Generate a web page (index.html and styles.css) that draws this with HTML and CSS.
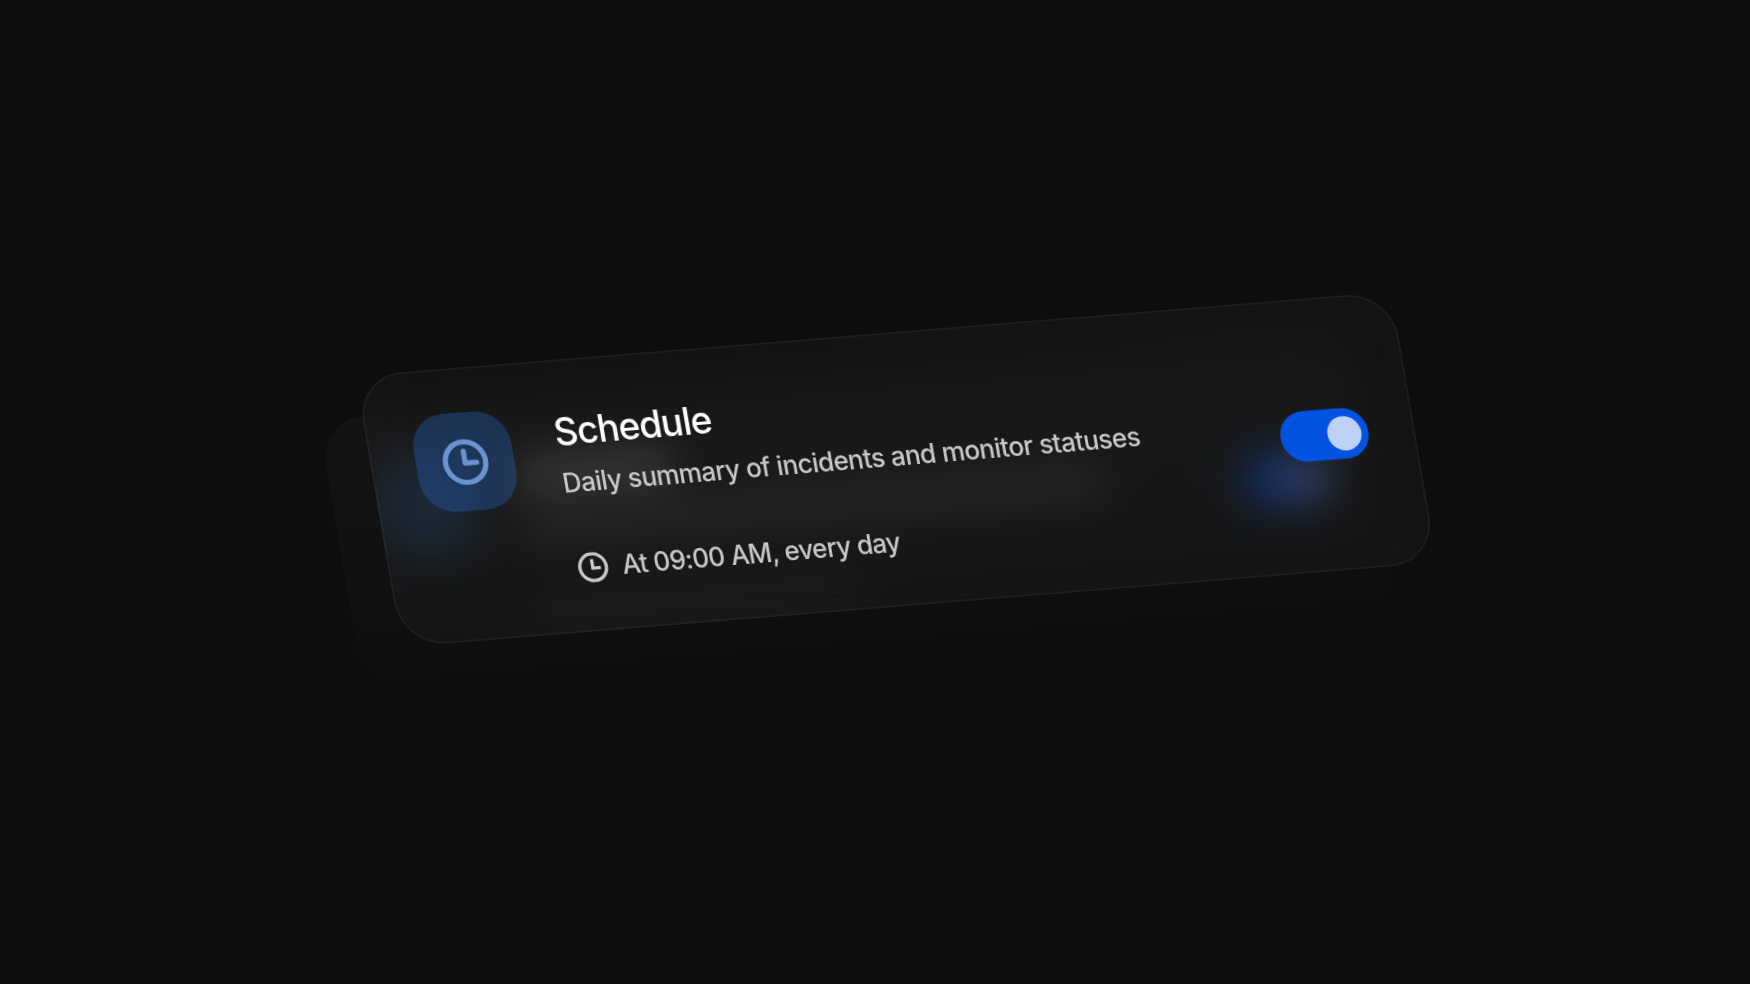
FILE: index.html
```
<!DOCTYPE html>
<html lang="en">
<head>
    <meta charset="utf-8">
    <title>Schedule</title>
    <link rel="stylesheet" href="styles.css">
</head>
<body>
    <div class="stage">
        <div class="card card-shadow" aria-hidden="true">
            <div class="icon"></div>
            <div class="content">
                <div class="bar bar-title"></div>
                <div class="bar bar-text"></div>
                <div class="bar bar-time"></div>
            </div>
            <div class="toggle"><span class="knob"></span></div>
        </div>

        <div class="card card-main">
            <div class="icon">
                <svg width="46" height="46" viewBox="0 0 46 46" fill="none" stroke="currentColor" stroke-width="5.2" stroke-linecap="round" stroke-linejoin="round">
                    <circle cx="23.5" cy="23" r="20"/>
                    <path d="M23 12.2V24H34.5"/>
                </svg>
            </div>
            <div class="content">
                <h1 class="title">Schedule</h1>
                <p class="text">Daily summary of incidents and monitor statuses</p>
                <div class="time">
                    <svg width="30" height="30" viewBox="0 0 30 30" fill="none" stroke="currentColor" stroke-width="3.3">
                        <circle cx="15" cy="15" r="13.2"/>
                        <path d="M14.6 7V16H22.6"/>
                    </svg>
                    <span class="time-label">At 09:00 AM, every day</span>
                </div>
            </div>
            <div class="toggle"><span class="knob"></span></div>
        </div>
    </div>
</body>
</html>
```
FILE: styles.css
```
body {
    margin: 0;
    height: 100vh;
    display: flex;
    align-items: center;
    justify-content: center;
    overflow: hidden;
    background-color: #0d0d0d;
    font-family: Inter, sans-serif;
}
.stage {
    display: grid;
    transform: matrix(0.9967, -0.0813, 0.172, 1.008, 0, 0);
}
.card {
    grid-area: 1 / 1;
    display: flex;
    align-items: flex-start;
    gap: 44px;
    width: 1039px;
    height: 269px;
    padding: 44px 46px 44px 45px;
    box-sizing: border-box;
    border-radius: 46px;
}
.card-shadow {
    transform: translate(-20px, 19px);
    background: linear-gradient(#131313, #111 60%, #0d0d0d);
}
.card-main {
    transform: translate(24.5px, -21px);
    background-color: rgba(255, 255, 255, 0.024);
    box-shadow: inset 0 0 0 1.5px rgba(255, 255, 255, 0.055);
    backdrop-filter: blur(20px);
}
.icon {
    flex: none;
    display: flex;
    align-items: center;
    justify-content: center;
    width: 98px;
    height: 97px;
    border-radius: 34px;
    background-color: rgba(40, 100, 190, 0.36);
    color: #6b93cf;
}
.icon svg,
.time svg {
    display: block;
}
.content {
    flex: 1;
    padding-top: 4px;
}
.title {
    margin: 0;
    color: #fff;
    font-size: 37px;
    font-weight: 500;
    line-height: 46px;
    letter-spacing: -1px;
}
.text {
    margin: 12px 0 0;
    color: #c8c8c8;
    font-size: 26px;
    font-weight: 450;
    line-height: 32px;
    letter-spacing: -0.57px;
    white-space: nowrap;
}
.time {
    display: flex;
    align-items: center;
    gap: 14px;
    margin: 52px 0 0 1px;
    color: #c8c8c8;
}
.time-label {
    font-size: 26px;
    font-weight: 450;
    line-height: 32px;
    letter-spacing: -0.7px;
    white-space: nowrap;
}
.toggle {
    flex: none;
    align-self: center;
    display: flex;
    align-items: center;
    justify-content: flex-end;
    width: 88px;
    height: 50px;
    margin-top: 1px;
    padding-right: 7px;
    box-sizing: border-box;
    border-radius: 25px;
    background-color: #0052e0;
}
.knob {
    width: 34px;
    height: 34px;
    border-radius: 50%;
    background-color: #bfd0f5;
}
.bar {
    border-radius: 6px;
}
.bar-title {
    width: 156px;
    height: 26px;
    margin-top: 10px;
    background-color: #404040;
}
.bar-text {
    width: 576px;
    height: 19px;
    margin-top: 28px;
    background-color: #2c2c2c;
}
.bar-time {
    width: 322px;
    height: 20px;
    margin-top: 63px;
    background-color: #1a1a1a;
}
.card-shadow .icon {
    background-color: rgba(40, 90, 150, 0.23);
}
.card-shadow .toggle {
    background-color: #0c2a66;
}
.card-shadow .knob {
    background-color: #465060;
}
```
